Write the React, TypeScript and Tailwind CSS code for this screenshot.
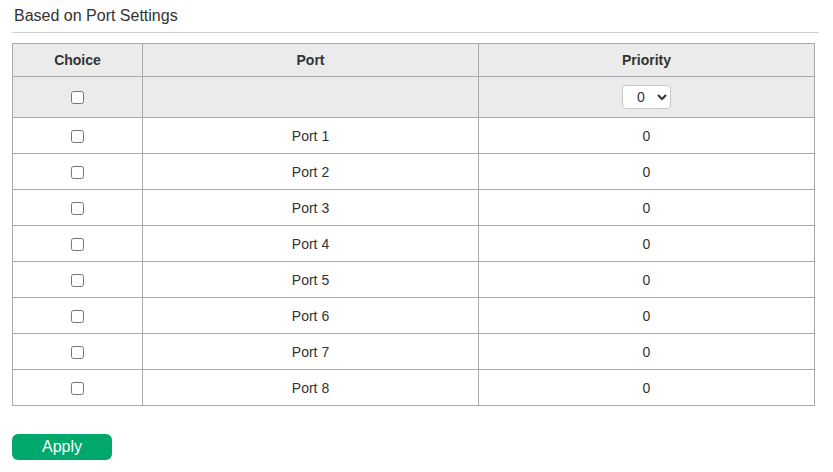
const ports = ["Port 1", "Port 2", "Port 3", "Port 4", "Port 5", "Port 6", "Port 7", "Port 8"];

export default function App() {
  return (
    <div className="bg-white px-3 pt-[5px] text-[#333] font-['Liberation_Sans',Arial,sans-serif]">
      <div className="pl-[2px] text-[16px] leading-[21px]">Based on Port Settings</div>
      <div className="mt-[6px] mr-[2px] border-b border-[#d0d0d0]" />

      <table className="mt-[10px] w-[803px] border-collapse text-[14px]">
        <thead>
          <tr className="bg-[#ebebeb] h-[33px]">
            <th className="w-[130px] border border-[#aaa] font-bold">Choice</th>
            <th className="w-[336px] border border-[#aaa] font-bold">Port</th>
            <th className="border border-[#aaa] font-bold">Priority</th>
          </tr>
        </thead>
        <tbody>
          <tr className="bg-[#ebebeb] h-[41px]">
            <td className="border border-[#aaa] text-center">
              <input type="checkbox" className="align-middle" />
            </td>
            <td className="border border-[#aaa]" />
            <td className="border border-[#aaa] text-center">
              <select className="h-[24px] w-[49px] rounded-[4px] border border-[#c8c8c8] bg-white pl-[10px] text-[14px] align-middle">
                <option>0</option>
                <option>1</option>
                <option>2</option>
                <option>3</option>
              </select>
            </td>
          </tr>
          {ports.map((port) => (
            <tr key={port} className="h-[36px]">
              <td className="border border-[#aaa] text-center">
                <input type="checkbox" className="align-middle" />
              </td>
              <td className="border border-[#aaa] pt-[2px] text-center">{port}</td>
              <td className="border border-[#aaa] pt-[2px] text-center">0</td>
            </tr>
          ))}
        </tbody>
      </table>

      <button className="mt-[28px] h-[26px] w-[100px] rounded-[6px] bg-[#00a86b] text-[16px] leading-[26px] text-white">
        Apply
      </button>
    </div>
  );
}
